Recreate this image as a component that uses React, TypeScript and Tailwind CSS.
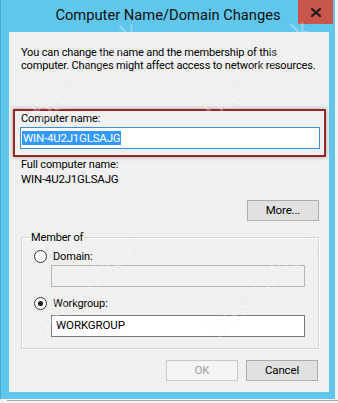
import React from "react";

const font = "[font-family:Roboto,Lato,Arial,sans-serif]";

function Btn({ children, disabled }: { children: React.ReactNode; disabled?: boolean }) {
  return (
    <div
      className={
        "w-[72px] h-[21px] flex items-center justify-center text-[11.5px] leading-none border " +
        (disabled
          ? "bg-[#f4f4f4] border-[#c9c9c9] text-[#a0a0a0]"
          : "bg-[#e1e1e1] border-[#adadad] text-[#000]")
      }
    >
      {children}
    </div>
  );
}

function Radio({ checked }: { checked?: boolean }) {
  return (
    <div className="w-[13px] h-[13px] rounded-full border border-[#333] bg-white flex items-center justify-center">
      {checked && <div className="w-[5px] h-[5px] rounded-full bg-[#1a1a1a]" />}
    </div>
  );
}

const marks = [
  { x: 85, y: 70 },
  { x: 256, y: 68 },
  { x: 82, y: 285 },
  { x: 260, y: 285 },
];

export default function App() {
  return (
    <div className={"relative w-[338px] h-[403px] overflow-hidden bg-[#f3f3f3] " + font}>
      <div className="w-[335px] h-[399px] bg-[#60c6eb] border-l border-[#4aa6d2] flex flex-col">
        {/* Title bar */}
        <div className="relative h-[32px] flex items-center justify-center">
          <span className="text-[14.7px] leading-none text-[#111] pb-[1px] whitespace-nowrap">Computer Name/Domain Changes</span>
          <div className="absolute right-[2px] top-0 w-[35px] h-[24px] bg-[#c9564c] flex items-center justify-center">
            <svg width="10" height="9" viewBox="0 0 10 9">
              <path d="M1 1 L9 8 M9 1 L1 8" stroke="#1c1c1c" strokeWidth="2.2" strokeLinecap="square" />
            </svg>
          </div>
        </div>
        {/* Content */}
        <div className="ml-[8px] w-[320px] h-[360px] bg-[#f0f0f0] flex flex-col text-[11px] tracking-[-0.15px] text-black">
          <p className="pt-[14px] pl-[12px] leading-[13px] whitespace-nowrap">
            You can change the name and the membership of this
            <br />
            computer. Changes might affect access to network resources.
          </p>

          <div className="mt-[37px] ml-[4px] w-[313px] h-[48px] border-2 border-[#9a2529] shadow-[0_0_4px_rgba(0,0,0,0.35)] flex flex-col">
            <div className="pl-[6px] leading-[13px] pt-[1px]">Computer name:</div>
            <div className="mt-[2px] ml-[5px] w-[300px] h-[22px] bg-white border border-[#3c8fdc] flex items-center pl-[1px]">
              <span className="bg-[#3399ff] text-white leading-[14px] px-[1px] text-[11.5px] tracking-[-0.2px]">WIN-4U2J1GLSAJG</span>
            </div>
          </div>

          <div className="pl-[12px] mt-[1px] leading-[14px]">Full computer name:</div>
          <div className="pl-[12px] leading-[15px] text-[11.5px] tracking-[-0.2px]">WIN-4U2J1GLSAJG</div>

          <div className="mt-[13px] ml-[238px]">
            <Btn>More...</Btn>
          </div>

          <fieldset className="mt-[10px] ml-[12px] w-[298px] border border-[#d5d5d5] shadow-[inset_1px_1px_0_#fff,1px_1px_0_#fff] px-0 pb-[11px] flex flex-col">
            <legend className="ml-[8px] px-[1px] leading-[13px]">Member of</legend>
            <div className="mt-[6px] ml-[12px] flex items-center gap-[6px] leading-[13px]">
              <Radio />
              <span>Domain:</span>
            </div>
            <div className="mt-[2px] ml-[29px] w-[254px] h-[22px] bg-[#f0f0f0] border border-[#b4b4b4]" />
            <div className="mt-[10px] ml-[12px] flex items-center gap-[6px] leading-[13px]">
              <Radio checked />
              <span>Workgroup:</span>
            </div>
            <div className="mt-[5px] ml-[29px] w-[254px] h-[22px] bg-white border border-[#7a7a7a] flex items-center pl-[4px] text-[11.5px] tracking-[-0.1px]">
              WORKGROUP
            </div>
          </fieldset>

          <div className="mt-[11px] mr-[11px] flex justify-end gap-[8px]">
            <Btn disabled>OK</Btn>
            <Btn>Cancel</Btn>
          </div>
        </div>
      </div>
      <div className="mt-[1px] ml-[7px] h-px bg-[#a8a8a8]" />

      {marks.map((m, i) => (
        <span
          key={i}
          className="pointer-events-none absolute -translate-x-1/2 -translate-y-1/2 rotate-[-42deg] text-[30px] leading-none whitespace-nowrap text-[rgba(255,255,255,0.3)] [-webkit-text-stroke:0.6px_rgba(0,0,0,0.07)] [font-family:Lato,sans-serif]"
          style={{ left: m.x, top: m.y }}
        >
          bakicubuk
        </span>
      ))}
    </div>
  );
}
